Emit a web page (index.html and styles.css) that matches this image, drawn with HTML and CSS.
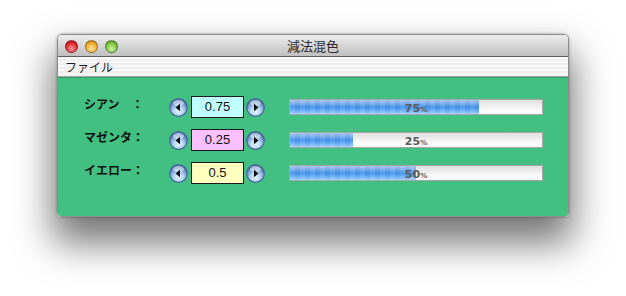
FILE: index.html
```html
<!DOCTYPE html>
<html lang="ja">
<head>
    <meta charset="UTF-8" />
    <title>減法混色</title>
    <link rel="stylesheet" href="styles.css">
</head>
<body>

<div class="window">
    <div class="titlebar">
        <div class="lights">
            <span class="light red"></span>
            <span class="light amber"></span>
            <span class="light green"></span>
        </div>
        <div class="title">減法混色</div>
        <div></div>
    </div>

    <div class="menubar"><span>ファイル</span></div>

    <div class="content">
        <!-- シアン -->
        <div class="row">
            <div class="label">シアン　：</div>
            <button class="step"><svg width="19" height="19" viewBox="0 0 19 19"><defs><radialGradient id="aq" cx="50%" cy="72%" r="62%"><stop offset="0" stop-color="#eaf6ff"/><stop offset="0.45" stop-color="#b4d6f6"/><stop offset="0.8" stop-color="#7497cc"/><stop offset="1" stop-color="#4c6fa6"/></radialGradient></defs><circle cx="9.5" cy="9.5" r="8.8" fill="url(#aq)" stroke="#45679c" stroke-width="1.2"/><ellipse cx="9.5" cy="5" rx="5.5" ry="3" fill="#fff" opacity="0.5"/><polygon points="6.5,9.5 11,5.8 11,13.2" fill="#0c0c0c"/></svg></button>
            <div class="field cyan">0.75</div>
            <button class="step"><svg width="19" height="19" viewBox="0 0 19 19"><circle cx="9.5" cy="9.5" r="8.8" fill="url(#aq)" stroke="#45679c" stroke-width="1.2"/><ellipse cx="9.5" cy="5" rx="5.5" ry="3" fill="#fff" opacity="0.5"/><polygon points="12.5,9.5 8,5.8 8,13.2" fill="#0c0c0c"/></svg></button>
            <div class="bar">
                <div class="fill" style="width:75%"></div>
                <span class="pct">75<small>%</small></span>
            </div>
        </div>

        <!-- マゼンタ -->
        <div class="row">
            <div class="label">マゼンタ：</div>
            <button class="step"><svg width="19" height="19" viewBox="0 0 19 19"><circle cx="9.5" cy="9.5" r="8.8" fill="url(#aq)" stroke="#45679c" stroke-width="1.2"/><ellipse cx="9.5" cy="5" rx="5.5" ry="3" fill="#fff" opacity="0.5"/><polygon points="6.5,9.5 11,5.8 11,13.2" fill="#0c0c0c"/></svg></button>
            <div class="field magenta">0.25</div>
            <button class="step"><svg width="19" height="19" viewBox="0 0 19 19"><circle cx="9.5" cy="9.5" r="8.8" fill="url(#aq)" stroke="#45679c" stroke-width="1.2"/><ellipse cx="9.5" cy="5" rx="5.5" ry="3" fill="#fff" opacity="0.5"/><polygon points="12.5,9.5 8,5.8 8,13.2" fill="#0c0c0c"/></svg></button>
            <div class="bar">
                <div class="fill" style="width:25%"></div>
                <span class="pct">25<small>%</small></span>
            </div>
        </div>

        <!-- イエロー -->
        <div class="row">
            <div class="label">イエロー：</div>
            <button class="step"><svg width="19" height="19" viewBox="0 0 19 19"><circle cx="9.5" cy="9.5" r="8.8" fill="url(#aq)" stroke="#45679c" stroke-width="1.2"/><ellipse cx="9.5" cy="5" rx="5.5" ry="3" fill="#fff" opacity="0.5"/><polygon points="6.5,9.5 11,5.8 11,13.2" fill="#0c0c0c"/></svg></button>
            <div class="field yellow">0.5</div>
            <button class="step"><svg width="19" height="19" viewBox="0 0 19 19"><circle cx="9.5" cy="9.5" r="8.8" fill="url(#aq)" stroke="#45679c" stroke-width="1.2"/><ellipse cx="9.5" cy="5" rx="5.5" ry="3" fill="#fff" opacity="0.5"/><polygon points="12.5,9.5 8,5.8 8,13.2" fill="#0c0c0c"/></svg></button>
            <div class="bar">
                <div class="fill" style="width:50%"></div>
                <span class="pct">50<small>%</small></span>
            </div>
        </div>
    </div>
</div>

</body>
</html>
```

FILE: styles.css
```css
:root {
    --green: #42c081;
    --green-line: #2f9c66;
    --text: #111;
}

* {
    box-sizing: border-box;
    margin: 0;
    padding: 0;
}

html, body {
    width: 100%;
    height: 100%;
    background: #fff;
    font-family: "Noto Sans CJK JP", "Liberation Sans", sans-serif;
    color: var(--text);
    overflow: hidden;
}

body {
    padding: 34px 0 0 57px;
}

/* =========================
   WINDOW FRAME
========================= */
.window {
    width: 512px;
    height: 183px;
    border: 1px solid #8c8c8c;
    border-radius: 5px 5px 4px 4px;
    overflow: hidden;
    display: flex;
    flex-direction: column;
    box-shadow: 0 22px 38px 4px rgba(0,0,0,0.55), 0 0 3px rgba(0,0,0,0.35);
}

.titlebar {
    height: 22px;
    display: grid;
    grid-template-columns: 1fr auto 1fr;
    align-items: center;
    background: linear-gradient(#ececec, #d6d6d6 50%, #bfbfbf);
    border-bottom: 1px solid #5e5e5e;
}

.lights {
    display: flex;
    gap: 7px;
    padding-left: 7px;
    padding-top: 1px;
}

.light {
    width: 13px;
    height: 13px;
    border-radius: 50%;
    border: 1px solid rgba(0,0,0,0.35);
}

.light.red   { background: radial-gradient(circle at 50% 70%, #ff9a9a, #e0262b 60%, #a3141a); }
.light.amber { background: radial-gradient(circle at 50% 70%, #ffe39a, #efa92a 60%, #b5720e); }
.light.green { background: radial-gradient(circle at 50% 70%, #cdf5a4, #79c13c 60%, #4a8a1c); }

.title {
    font-size: 13px;
    color: #2a2a2a;
    line-height: 21px;
}

.menubar {
    height: 20px;
    padding-left: 7px;
    font-size: 12px;
    line-height: 20px;
    color: #1a1a1a;
    background: repeating-linear-gradient(#f8f8f8 0, #f8f8f8 2px, #efefef 2px, #efefef 4px);
    border-bottom: 1px solid #a9a9a9;
}

/* =========================
   CONTENT
========================= */
.content {
    flex: 1;
    background: var(--green);
    border-top: 1px solid var(--green-line);
    padding: 18px 25px 0 26px;
    display: flex;
    flex-direction: column;
    gap: 11px;
}

.row {
    height: 22px;
    display: flex;
    align-items: center;
}

.label {
    width: 85px;
    align-self: flex-start;
    font-size: 12px;
    font-weight: bold;
    line-height: 16px;
    white-space: nowrap;
}

.step {
    width: 19px;
    height: 19px;
    border: none;
    background: none;
    display: block;
    cursor: pointer;
}

.step svg { display: block; }

.field {
    width: 53px;
    height: 22px;
    margin: 0 2px 0 3px;
    border: 1px solid #1a1a1a;
    font-family: "Liberation Sans", Arial, sans-serif;
    font-size: 13px;
    line-height: 20px;
    text-align: center;
}

.field.cyan    { background: #c0ffff; }
.field.magenta { background: #ffc0ff; }
.field.yellow  { background: #ffffc0; }

/* =========================
   PROGRESS BAR
========================= */
.bar {
    position: relative;
    flex: 1;
    height: 16px;
    margin-left: 24px;
    border: 1px solid #a6a6a6;
    background: linear-gradient(#dedede, #ececec 35%, #f7f7f7 60%, #fff);
}

.fill {
    height: 100%;
    background:
        repeating-linear-gradient(90deg, rgba(255,255,255,0.08) 0 5px, rgba(0,0,0,0.02) 5px 10px),
        linear-gradient(#a7c6ee, #78aeee 25%, #3f8fe8 50%, #6db2f8 78%, #a4d3ff);
}

.pct {
    position: absolute;
    inset: 0;
    text-align: center;
    font-family: "DejaVu Sans", sans-serif;
    font-size: 11px;
    font-weight: bold;
    line-height: 18px;
    color: #5c5c5c;
}

.pct small {
    font-size: 7px;
}
```
